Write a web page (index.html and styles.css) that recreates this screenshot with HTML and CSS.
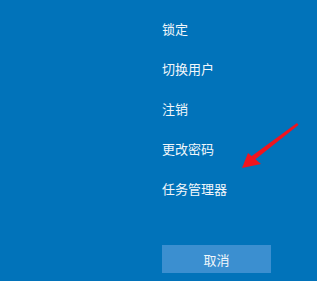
FILE: index.html
```html
<!DOCTYPE html>
<html>
<head>
    <title>Ctrl+Alt+Del</title>
    <link rel="stylesheet" href="styles.css">
</head>
<body>
    <div class="screen">
        <ul class="menu">
            <li>锁定</li>
            <li>切换用户</li>
            <li>注销</li>
            <li>更改密码</li>
            <li>任务管理器</li>
        </ul>
        <button class="btn">取消</button>

        <!-- red arrow pointing at task manager -->
        <svg class="arrow" width="70" height="60" viewBox="0 0 70 60">
            <path d="M62 8 L63.5 10 L17 47 L14 43 Z" fill="#f0141e"/>
            <path d="M7 53 L13 38 L26 49 Z" fill="#f0141e"/>
        </svg>
    </div>
</body>
</html>
```

FILE: styles.css
```css
body {
    margin: 0;
    background: #0173ba;
    font-family: "Noto Sans CJK SC", "Noto Sans", sans-serif;
    color: #f2f7fb;
}
.screen {
    position: relative;
    width: 317px;
    height: 281px;
    padding: 9px 0 0 162px;
    box-sizing: border-box;
}
.menu {
    list-style: none;
    margin: 0;
    padding: 0;
}
.menu li {
    font-size: 13px;
    line-height: 40px;
    height: 40px;
}
.btn {
    margin-top: 36px;
    width: 109px;
    height: 28px;
    border: none;
    background: #3b8fd0;
    color: #f2f7fb;
    font-family: inherit;
    font-size: 13px;
    padding: 0;
}
.arrow {
    position: absolute;
    left: 235px;
    top: 115px;
}
```
